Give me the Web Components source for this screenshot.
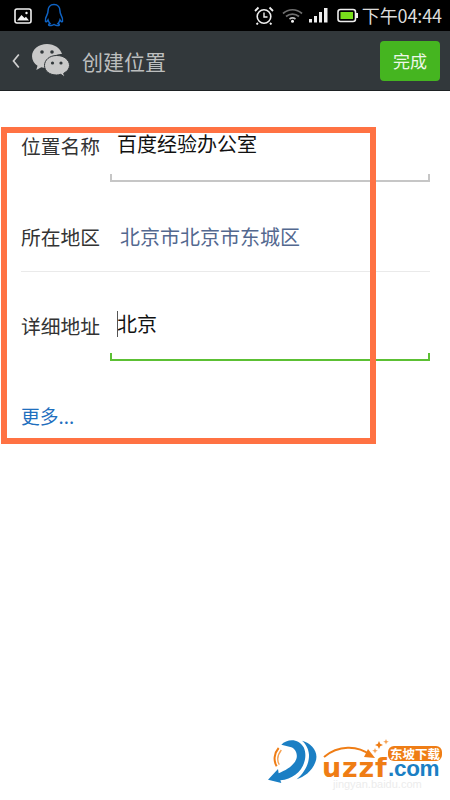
<!DOCTYPE html>
<html lang="zh"><head><meta charset="utf-8"><title>创建位置</title>
<style>
html,body{margin:0;padding:0;background:#fff}
body{width:450px;height:800px;position:relative;overflow:hidden;font-family:"Noto Sans CJK SC","Noto Sans",sans-serif}
</style></head><body>
<status-bar></status-bar>
<app-bar title="创建位置" action="完成"></app-bar>
<location-form>
<form-field label="位置名称" value="百度经验办公室" kind="input"></form-field>
<form-field label="所在地区" value="北京市北京市东城区" kind="link"></form-field>
<form-field label="详细地址" value="北京" kind="focus"></form-field>
<more-link>更多...</more-link>
</location-form>
<highlight-box></highlight-box>
<uzzf-logo></uzzf-logo>
<script>
function def(name, html){
  customElements.define(name, class extends HTMLElement{
    constructor(){super();this.attachShadow({mode:'open'});}
    connectedCallback(){this.shadowRoot.innerHTML=typeof html==='function'?html(this):html;}
  });
}
def('status-bar',`<style>
:host{display:flex;align-items:center;height:31px;background:#000;padding:0 8px 0 14px;box-sizing:border-box;color:#e4e4e4}
svg{display:block}.l{display:flex;gap:12px;align-items:center}
.r{margin-left:auto;display:flex;align-items:center}
.t{font:18px/31px "Noto Sans CJK SC",sans-serif;color:#dcdcdc;margin-left:4px;letter-spacing:-.1px}
</style>
<div class="l">
<svg width="18" height="16" viewBox="0 0 18 16"><rect x="1" y="1" width="16" height="14" rx="2" fill="#000" stroke="#f2f2f2" stroke-width="1.6"/><path d="M3 12.5 7.5 7l3 3 1.5-1.2 3 3.7z" fill="#f2f2f2"/><circle cx="12.5" cy="5" r="1.2" fill="#f2f2f2"/></svg>
<svg width="20" height="25" viewBox="0 0 20 25"><path d="M10 1.5c-4 0-6 3-6 6.500 0 1.500-.3 2.500-1 3.800C1.800 14 1 16.500 1.500 18.500c.5 1 1.800-.2 2.500-1.500.4 1.500 1 2.600 2 3.500-1 .5-1.700 1.100-1.200 1.700.8.700 3.700.3 5.200-.7 1.500 1 4.400 1.400 5.200.7.500-.6-.2-1.200-1.200-1.700 1-.9 1.600-2 2-3.500.7 1.300 2 2.500 2.500 1.500.5-2-.3-4.500-1.500-6.700-.7-1.300-1-2.300-1-3.800 0-3.500-2-6.500-6-6.500z" fill="none" stroke="#0f63c4" stroke-width="1.500"/></svg>
</div>
<div class="r">
<svg width="20" height="19" viewBox="0 0 20 19" style="margin-right:8px"><circle cx="10" cy="10.500" r="6.800" fill="none" stroke="#eee" stroke-width="1.600"/><path d="M10 6.500V11h3.500" fill="none" stroke="#eee" stroke-width="1.400"/><path d="M1 5 4.500 1.500M19 5 15.500 1.500M4 17l-1.500 1.500M16 17l1.500 1.500" stroke="#eee" stroke-width="1.800"/></svg>
<svg width="21" height="15" viewBox="0 0 21 15" style="margin-right:6px"><path d="M1 5.500C6.500.5 14.500.5 20 5.500M4 8.500c3.800-3.200 9.200-3.200 13 0" fill="none" stroke="#6e6e6e" stroke-width="1.700"/><path d="M7.500 11c1.800-1.300 4.200-1.300 6 0" fill="none" stroke="#bdbdbd" stroke-width="1.600"/><circle cx="10.500" cy="13.300" r="1.500" fill="#f2f2f2"/></svg>
<svg width="19" height="15" viewBox="0 0 19 15" style="margin-right:9px"><rect x="0" y="11" width="3" height="3.500" fill="#eee"/><rect x="5" y="8" width="3" height="6.500" fill="#eee"/><rect x="10" y="4" width="3" height="10.500" fill="#eee"/><rect x="15" y="0" width="3.500" height="14.500" fill="#eee"/></svg>
<svg width="21" height="15" viewBox="0 0 21 15"><rect x="1" y="1.500" width="17.500" height="12" rx="2.500" fill="#000" stroke="#eee" stroke-width="1.600"/><rect x="3.500" y="4" width="12.500" height="7" fill="#79e01c"/><rect x="19" y="5" width="2" height="5" fill="#eee"/></svg>
<span class="t">下午04:44</span>
</div>`);
def('app-bar',h=>`<style>
:host{display:flex;align-items:center;height:60px;background:#32383b;border-bottom:1px solid #1e2224;box-sizing:border-box;padding:0 10px 0 12px;color:#c8c8c8}
svg{display:block}
.t{font:21px/30px "Noto Sans CJK SC",sans-serif;color:#bcbebe;margin-left:12px}
button{all:unset;margin-left:auto;width:60px;height:40px;border-radius:4px;background:#45b520;color:#eef7e9;font:17px/40px "Noto Sans CJK SC",sans-serif;text-align:center}
</style>
<svg width="8" height="16" viewBox="0 0 8 16"><path d="M6.800 1.500 1.500 8l5.300 6.500" fill="none" stroke="#d0d0d0" stroke-width="1.700"/></svg>
<svg width="38" height="34" viewBox="0 0 38 34" style="margin-left:12px"><path d="M15 0C6.700 0 0 5.400 0 12.200c0 3.900 2.200 7.300 5.500 9.500L4.300 26l5-2.800c1.500.5 3.100.7 5 .8C18 13 24 9.500 30 10 28.400 4.300 22.300 0 15 0z" fill="#c9c9c9"/><path d="M24.500 11.500C17.500 11.500 12.500 16 12.500 21.500S17.500 31 24.500 31c1.500 0 3-.3 4.300-.7l3.900 2.900-1-3.900c3.500-1.800 5.800-4.700 5.800-7.800 0-5.500-5.500-10-12.500-10z" fill="#c9c9c9" stroke="#32383b" stroke-width="1"/><circle cx="10" cy="8" r="1.800" fill="#32383b"/><circle cx="20" cy="8" r="1.800" fill="#32383b"/><circle cx="20.500" cy="19" r="1.600" fill="#32383b"/><circle cx="29" cy="19" r="1.600" fill="#32383b"/></svg>
<span class="t">${h.getAttribute('title')}</span>
<button>${h.getAttribute('action')}</button>`);
def('location-form',`<style>:host{display:block;padding:41px 20px 0 21px}</style><slot></slot>`);
def('form-field',h=>{
 const k=h.getAttribute('kind'),v=h.getAttribute('value'),l=h.getAttribute('label');
 const isLink=k==='link',isFocus=k==='focus';
 const color=isFocus?'#5cc034':'#c6c6c6';
 return `<style>
:host{display:grid;grid-template-columns:89px 1fr;box-sizing:border-box;${isLink?'height:90px;padding-top:41px;border-bottom:1px solid #eaeaea;':isFocus?'height:89px;padding-top:40px;':'height:50px;'}}
.l{font:19.800px/26px "Noto Sans CJK SC",sans-serif;color:#333;margin-top:1px}
.box{position:relative;height:${isFocus?'49px':'50px'};border-bottom:2px solid ${color};box-sizing:border-box;${isLink?'border:0;':''}}
.box::before,.box::after{content:"";position:absolute;bottom:0;width:2px;height:6px;background:${color};${isLink?'display:none;':''}}
.box::before{left:0}.box::after{right:0}
.v{font:20px/26px "Noto Sans CJK SC",sans-serif;color:#111;padding-left:7px;position:relative;margin-top:-1px}
.link{color:#53688f;padding-left:10px;margin-top:1px}
.caret{position:absolute;left:7px;top:0;width:1px;height:26px;background:#555}
</style><div class="l">${l}</div><div class="box"><div class="v ${isLink?'link':''}">${isFocus?'<i class="caret"></i>':''}${v}</div></div>`});
def('more-link',`<style>:host{display:block;margin-top:42px;font:18.800px/26px "Noto Sans CJK SC",sans-serif;color:#1f6fbe}</style><slot></slot>`);
def('highlight-box',`<style>:host{position:absolute;left:1px;top:127px;width:375px;height:317px;border:6px solid #ff7243;box-sizing:border-box;pointer-events:none}</style>`);
def('uzzf-logo',`<style>
:host{position:absolute;left:266px;top:736px;width:184px;height:62px;display:block}
svg{position:absolute}
.w{position:absolute;left:56px;top:24px;font:700 27px/16px "DejaVu Sans",sans-serif;color:#ef7d15;letter-spacing:.8px;white-space:nowrap}
.c{position:absolute;left:122px;top:26px;font:700 22.500px/14px "Liberation Sans",sans-serif;color:#1b7fc4;letter-spacing:-.3px;white-space:nowrap}
.b{position:absolute;left:122px;top:10px;width:54px;height:15px;border-radius:6px;background:#ef7d15;color:#fff;font:700 12.500px/15px "Noto Sans CJK SC",sans-serif;text-align:center;white-space:nowrap}
.g{position:absolute;left:67px;top:42px;font:11px/13px "Liberation Sans",sans-serif;color:#ececec;white-space:nowrap}
</style>
<svg style="left:-4px;top:-2px" width="60" height="52" viewBox="0 0 180 156">
<path d="M18 137 48 105 50 118C72 108 95 96 103 75 108 60 100 45 88 40L58 32C75 14 110 12 125 40 138 68 125 105 100 122 88 131 72 137 55 139L58 147z" fill="#1b7fc4"/>
<path d="M120 20C150 28 172 55 160 85 150 112 125 130 104 136 125 118 142 92 141 62 140 45 132 30 120 20z" fill="#1b7fc4"/>
<path d="M50 42C36 58 34 80 44 97" fill="none" stroke="#ef7d15" stroke-width="6"/>
<path d="M58 48C47 62 44 78 52 92" fill="none" stroke="#f5a050" stroke-width="4"/>
</svg>
<svg style="left:0;top:0" width="184" height="40" viewBox="0 0 184 40">
<path d="M58 21C72 9 92 9 104 19" fill="none" stroke="#ef7d15" stroke-width="2"/>
<path d="M102 13l7 9-11-1z" fill="#ef7d15"/>
<path d="M113 5l1.200 2.800 2.800 1.200-2.800 1.200-1.200 2.800-1.200-2.800-2.800-1.200 2.800-1.200z" fill="#ef7d15"/>
<path d="M120 3l.8 2 2 .8-2 .8-.8 2-.8-2-2-.8 2-.8z" fill="#f5a050"/>
<path d="M109 12l.8 2 2 .8-2 .8-.8 2-.8-2-2-.8 2-.8z" fill="#f5a050"/>
</svg>
<div class="b">东坡下载</div>
<div class="w">uzzf</div><div class="c">.com</div>
<div class="g">jingyan.baidu.com</div>`);
</script>
</body></html>
